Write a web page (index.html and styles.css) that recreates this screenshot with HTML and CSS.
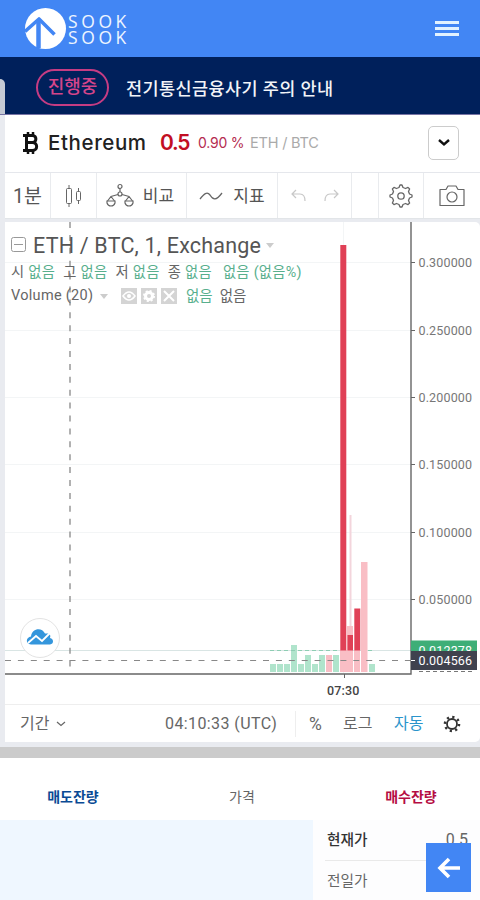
FILE: index.html
```
<!DOCTYPE html>
<html lang="ko">
<head>
    <meta charset="UTF-8" />
    <meta name="viewport" content="width=device-width, initial-scale=1.0"/>
    <title>SOOK SOOK - Ethereum</title>
    <link rel="stylesheet" href="styles.css">
</head>
<body>
<header class="header">
    <a class="logo">
        <svg width="44" height="44" viewBox="0 0 44 44">
            <circle cx="21.5" cy="21.5" r="20.5" fill="#fff"/>
            <path d="M1 24.500L15 12L30.500 27.500" fill="none" stroke="#4286f4" stroke-width="3.600" stroke-linejoin="round"/>
            <path d="M14.500 14V41" stroke="#4286f4" stroke-width="4.500"/>
        </svg>
        <span class="logo-text">SOOK<br>SOOK</span>
    </a>
    <div class="menu"><i></i><i></i><i></i></div>
</header>

<div class="notice">
    <span class="badge">진행중</span>
    <span class="notice-text">전기통신금융사기 주의 안내</span>
    <div class="drawer"></div>
</div>

<main class="market">
    <section class="ticker">
        <svg class="coin" width="18" height="26" viewBox="0 0 18 26" fill="none" stroke="#111" stroke-width="3">
            <path d="M1 5.500H10.500C15 5.500 15 12.500 10.500 12.500H5M10.500 12.500C16 12.500 16 20.500 10.500 20.500H1M4.500 5.500V20.500"/>
            <path d="M6 2V5M11 2V5M6 21V24M11 21V24" stroke-width="2.500"/>
        </svg>
        <span class="name">Ethereum</span>
        <span class="price">0.5</span>
        <span class="change">0.90 %</span>
        <span class="pair">ETH / BTC</span>
        <button class="dropdown">
            <svg width="14" height="9" viewBox="0 0 14 9"><path d="M2 2L7 6.500L12 2" fill="none" stroke="#111" stroke-width="2.400"/></svg>
        </button>
    </section>

    <nav class="toolbar">
        <div class="tool tool-time">1분</div>
        <div class="tool tool-candle">
            <svg width="18" height="24" viewBox="0 0 18 24" fill="none" stroke="#666"><rect x="1.500" y="4.500" width="5" height="15" rx="1"/><rect x="11.500" y="7.500" width="4" height="9" rx="1"/><path d="M4 1V4M4 20V23M13.500 4V7M13.500 17V20"/></svg>
        </div>
        <div class="tool tool-compare">
            <svg width="28" height="25" viewBox="0 0 28 25" fill="none" stroke="#666" stroke-width="1.200"><circle cx="14" cy="3.500" r="2"/><path d="M14 5.500V9M12 11.500L5 13.500L1.500 18M16 11.500L23 13.500L26.500 18M5 13.500L8.500 18M23 13.500L19.500 18"/><circle cx="14" cy="11" r="2"/><path d="M1 18H9V20Q8 23 5 23Q2 23 1 20ZM19 18H27V20Q26 23 23 23Q20 23 19 20Z"/></svg>
            <span>비교</span>
        </div>
        <div class="tool tool-index">
            <svg width="24" height="12" viewBox="0 0 24 12" fill="none" stroke="#666" stroke-width="1.300"><path d="M1 9C5 4 8 1 11 5C14 10 17 11 23 3"/></svg>
            <span>지표</span>
        </div>
        <div class="tool tool-undo">
            <svg width="15" height="14" viewBox="0 0 15 14" fill="none" stroke="#c8c8c8" stroke-width="1.200"><path d="M5 1L1 5L5 9M1 5H9Q14 5 14 12"/></svg>
            <svg width="15" height="14" viewBox="0 0 15 14" fill="none" stroke="#c8c8c8" stroke-width="1.200"><path d="M10 1L14 5L10 9M14 5H6Q1 5 1 12"/></svg>
        </div>
        <div class="tool tool-empty"></div>
        <div class="tool tool-settings">
            <svg width="26" height="26" viewBox="0 0 26 26" fill="none" stroke="#666" stroke-width="1.300"><path stroke-linejoin="round" d="M11 4.500L12 2H14L15 4.500L17.500 5.500L20 4.400L21.600 6L20.500 8.500L21.500 11L24 12V14L21.500 15L20.500 17.500L21.600 20L20 21.600L17.500 20.500L15 21.500L14 24H12L11 21.500L8.500 20.500L6 21.600L4.400 20L5.500 17.500L4.500 15L2 14V12L4.500 11L5.500 8.500L4.400 6L6 4.400L8.500 5.500Z"/><circle cx="13" cy="13" r="3.200"/></svg>
        </div>
        <div class="tool tool-camera">
            <svg width="26" height="22" viewBox="0 0 26 22" fill="none" stroke="#666" stroke-width="1.200"><path d="M1 4.500H7L9 1H17L19 4.500H25V20.500H1Z" stroke-linejoin="round"/><circle cx="13" cy="12" r="5"/></svg>
        </div>
    </nav>

    <section class="chart">
        <svg class="plot" width="474" height="482" viewBox="5 222 474 482">
            <!-- grid -->
            <path d="M5 262.500H411M5 330.500H411M5 397.500H411M5 464.500H411M5 532.500H411M5 599.500H411M343.500 222V673" stroke="#f3f5f6"/>
            <path d="M5 650.500H411" stroke="#d9e5e4"/>

            <!-- volume -->
            <g fill="#b0e4cc">
                <rect x="270" y="664" width="6" height="8"/>
                <rect x="277" y="664" width="6" height="8"/>
                <rect x="284" y="664" width="6" height="8"/>
                <rect x="291" y="645" width="6" height="27"/>
                <rect x="298" y="664" width="6" height="8"/>
                <rect x="305" y="655" width="6" height="17"/>
                <rect x="312" y="664" width="6" height="8"/>
                <rect x="319" y="655" width="6" height="17"/>
                <rect x="333" y="655" width="6" height="17"/>
                <rect x="369" y="664" width="6" height="8"/>
            </g>
            <g fill="#f9bec5">
                <rect x="326" y="655" width="6" height="17"/>
                <rect x="340" y="650" width="7" height="22"/>
                <rect x="347" y="626" width="6" height="46"/>
                <rect x="354" y="650" width="6" height="22"/>
                <rect x="361" y="562" width="6.500" height="110"/>
                <rect x="349.500" y="515" width="2" height="111" fill="#f3d5dc"/>
            </g>

            <!-- candles -->
            <g fill="#e04056">
                <rect x="340.300" y="245" width="6" height="405.500"/>
                <rect x="347.500" y="635" width="5.500" height="15.500"/>
                <rect x="354.300" y="608.500" width="6" height="42"/>
            </g>
            <path d="M270 650.500H340M368 650.500H375" stroke="#8ecdb3" stroke-dasharray="4 3"/>

            <!-- crosshair -->
            <path d="M70 222V667" stroke="#888" stroke-width="1.300" stroke-dasharray="6 6.900"/>
            <path d="M5 660.500H411" stroke="#888" stroke-width="1.200" stroke-dasharray="6 6.900"/>

            <!-- axes -->
            <path d="M411 222V674H5" fill="none" stroke="#666" stroke-width="1.400"/>
            <path d="M411 262.500H415M411 330.500H415M411 397.500H415M411 464.500H415M411 532.500H415M411 599.500H415M344.500 674V678" stroke="#666"/>
            <g class="axis-label">
                <text x="418.500" y="267">0.300000</text>
                <text x="418.500" y="335">0.250000</text>
                <text x="418.500" y="402">0.200000</text>
                <text x="418.500" y="469">0.150000</text>
                <text x="418.500" y="537">0.100000</text>
                <text x="418.500" y="604">0.050000</text>
                <text x="327" y="695" class="time-label">07:30</text>
            </g>
            <rect x="411" y="640.500" width="66" height="14" fill="#3eae77"/>
            <text x="418.500" y="655" class="tag-label">0.012378</text>
            <rect x="411" y="651" width="66" height="19" fill="#3f424e"/>
            <text x="418.500" y="665" class="tag-label">0.004566</text>
            <path d="M411 660.500H415" stroke="#fff"/>
            <path d="M419 671.500H472" stroke="#777" stroke-dasharray="4 3"/>

            <circle cx="40" cy="638" r="19.500" fill="#fff" stroke="#e3e3e3"/>
            <path d="M31 644.500C25 644 26 637 31 636.500C32 628 42 627 45 633.500C50 633 51 635 50 638C54 639 54 644 50 644.500Z" fill="#3496dc"/>
            <path d="M28 643L36 636L42 641L50 633" fill="none" stroke="#fff" stroke-width="1.800"/>
        </svg>

        <div class="legend">
            <div class="legend-title">
                <svg width="16" height="16" viewBox="0 0 16 16" fill="none" stroke="#999"><rect x=".5" y=".5" width="14" height="14" rx="2"/><path d="M3 7.500H12"/></svg>
                <span>ETH / BTC, 1, Exchange</span>
                <i class="caret"></i>
            </div>
            <div class="legend-values">
                <span>시 <b>없음</b></span>
                <span>고 <b>없음</b></span>
                <span>저 <b>없음</b></span>
                <span>종 <b>없음</b></span>
                <span><b>없음 (없음%)</b></span>
            </div>
            <div class="legend-volume">
                <span class="volume-name">Volume (20)</span>
                <i class="caret"></i>
                <div class="study-buttons">
                    <svg width="16" height="16" viewBox="0 0 16 16"><rect width="16" height="16" fill="#d4d4d4"/><path d="M2 8Q8 0 14 8Q8 16 2 8Z" fill="none" stroke="#fff" stroke-width="1.500"/><circle cx="8" cy="8" r="2" fill="#fff"/></svg>
                    <svg width="16" height="16" viewBox="0 0 16 16"><rect width="16" height="16" fill="#d4d4d4"/><circle cx="8" cy="8" r="3.500" fill="none" stroke="#fff" stroke-width="3"/><circle cx="8" cy="8" r="5" fill="none" stroke="#fff" stroke-width="2" stroke-dasharray="2 1.930"/></svg>
                    <svg width="16" height="16" viewBox="0 0 16 16"><rect width="16" height="16" fill="#d4d4d4"/><path d="M3 3L13 13M13 3L3 13" stroke="#fff" stroke-width="2"/></svg>
                </div>
                <b>없음</b>
                <span class="volume-none">없음</span>
            </div>
        </div>
    </section>

    <footer class="chart-footer">
        <span class="range">기간</span>
        <svg class="range-arrow" width="10" height="6" viewBox="0 0 10 6"><path d="M1 1L5 4.500L9 1" fill="none" stroke="#666" stroke-width="1.200"/></svg>
        <span class="clock">04:10:33 (UTC)</span>
        <span class="percent">%</span>
        <span class="log">로그</span>
        <span class="auto">자동</span>
        <svg width="18" height="18" viewBox="0 0 18 18" fill="none" stroke="#333"><circle cx="9" cy="9" r="5" stroke-width="1.800"/><circle cx="9" cy="9" r="7" stroke-width="2.600" stroke-dasharray="2.200 3.300"/></svg>
    </footer>
</main>

<section class="orderbook">
    <div class="order-head">
        <span class="sell">매도잔량</span>
        <span class="cost">가격</span>
        <span class="buy">매수잔량</span>
    </div>
    <div class="order-body">
        <div class="asks"></div>
        <div class="summary">
            <div class="row current"><span>현재가</span><span class="value">0.5</span></div>
            <div class="row"><span>전일가</span></div>
        </div>
    </div>
</section>

<button class="back">
    <svg width="24" height="24" viewBox="0 0 24 24"><path d="M12 3L3 12L12 21M3 12H23" fill="none" stroke="#fff" stroke-width="3.600"/></svg>
</button>
</body>
</html>
```
FILE: styles.css
```
* {
    box-sizing: border-box;
}
body {
    margin: 0;
    width: 480px;
    height: 900px;
    overflow: hidden;
    background: #fff;
    color: #666;
    font-family: Roboto, "Noto Sans CJK KR", sans-serif;
    font-size: 16px;
}
i {
    display: block;
}
svg {
    display: block;
    flex-shrink: 0;
}
span, b {
    white-space: nowrap;
}
button {
    display: flex;
    align-items: center;
    justify-content: center;
    padding: 0;
}
.header {
    height: 57px;
    padding: 0 21px 0 24px;
    display: flex;
    align-items: center;
    justify-content: space-between;
    background: #4286f4;
}
.logo {
    display: flex;
    align-items: center;
}
.logo-text {
    color: #eef5ff;
    font-family: "Open Sans", sans-serif;
    font-size: 17.5px;
    line-height: 16px;
    letter-spacing: 3.6px;
}
.menu {
    width: 24px;
    display: grid;
    gap: 3px;
}
.menu i {
    height: 3px;
    background: #e2f2ff;
}
.notice {
    position: relative;
    height: 58px;
    padding: 4px 0 0 36px;
    display: flex;
    align-items: center;
    background: #00205b;
    border-bottom: 1px solid #7774a5;
}
.badge {
    width: 73px;
    height: 37px;
    margin-right: 17px;
    border: 2px solid #c53c83;
    border-radius: 19px;
    color: #d4458a;
    font-size: 18px;
    font-weight: 500;
    line-height: 32px;
    text-align: center;
}
.notice-text {
    color: #f2f4f8;
    font-size: 17.5px;
    font-weight: 500;
    letter-spacing: 0.4px;
}
.drawer {
    position: absolute;
    left: 0;
    bottom: 0;
    width: 5px;
    height: 35px;
    background: #c5cad4;
    border-radius: 0 5px 0 0;
}
.market {
    height: 643px;
    padding-left: 5px;
    background: #e9ebf0;
    border-bottom: 11px solid #cbcbcb;
}
.ticker {
    height: 58px;
    padding: 0 21px 2px 17px;
    display: flex;
    align-items: center;
    background: #fff;
    border-bottom: 1px solid #e5e7ec;
}
.coin {
    margin-right: 8px;
}
.name {
    width: 112px;
    color: #222;
    font-family: Inter, sans-serif;
    font-size: 20.5px;
    font-weight: 500;
    letter-spacing: 0.6px;
}
.price {
    width: 38px;
    color: #c20e23;
    font-family: Inter, sans-serif;
    font-size: 21px;
    font-weight: 600;
    letter-spacing: -1.2px;
}
.change {
    width: 52px;
    color: #b52c50;
    font-family: Inter, sans-serif;
    font-size: 14px;
    letter-spacing: -0.2px;
}
.pair {
    color: #aaa;
    font-family: Inter, sans-serif;
    font-size: 14.5px;
    letter-spacing: -0.2px;
}
.dropdown {
    width: 31px;
    height: 34px;
    margin-left: auto;
    background: #fff;
    border: 1px solid #ccc;
    border-radius: 5px;
}
.toolbar {
    height: 46px;
    display: flex;
    background: #fff;
    border-bottom: 1px solid #e2e5e8;
}
.tool {
    display: flex;
    align-items: center;
    justify-content: center;
    border-right: 1px solid #e9ebee;
    color: #555;
    font-size: 17px;
}
.tool span {
    padding-bottom: 2px;
}
.tool-time {
    width: 46px;
    padding-bottom: 2px;
    font-size: 19.5px;
}
.tool-candle {
    width: 46px;
}
.tool-compare {
    width: 90px;
    padding-right: 3px;
    gap: 9px;
}
.tool-index {
    width: 91px;
    gap: 10px;
}
.tool-undo {
    width: 74px;
    gap: 18px;
}
.tool-empty {
    width: 27px;
}
.tool-settings {
    width: 45px;
}
.tool-camera {
    flex: 1;
    border: 0;
}
.chart {
    position: relative;
    height: 483px;
    margin-top: 3px;
    background: #fff;
    border-radius: 0 5px 0 0;
    border-bottom: 1px solid #eee;
}
.axis-label {
    fill: #777;
    font-size: 12.5px;
    letter-spacing: 0.15px;
}
.time-label {
    fill: #444;
    font-weight: 500;
}
.tag-label {
    fill: #fff;
    font-size: 12.5px;
    letter-spacing: 0.15px;
}
.legend {
    position: absolute;
    top: 9px;
    left: 6px;
    font-size: 14px;
}
.legend b {
    color: #58af8d;
    font-weight: 400;
}
.legend-title {
    height: 28px;
    display: flex;
    align-items: center;
    color: #555;
    font-size: 21.5px;
    letter-spacing: 0.2px;
}
.legend-title span {
    margin: 0 5px 0 6px;
}
.caret {
    border: 4px solid transparent;
    border-top: 5px solid #ccc;
    border-bottom: 0;
}
.legend-values {
    height: 22px;
    display: flex;
    align-items: center;
    gap: 8px;
    font-size: 14.3px;
    letter-spacing: 0.3px;
}
.legend-values span:last-child {
    margin-left: 3px;
}
.legend-volume {
    height: 30px;
    display: flex;
    align-items: center;
}
.volume-name {
    width: 89px;
    padding-bottom: 1px;
    font-size: 14.5px;
    letter-spacing: 0.3px;
}
.study-buttons {
    width: 65px;
    margin-left: 13px;
    display: flex;
    gap: 4px;
}
.legend-volume b {
    margin-right: 7px;
    padding-bottom: 3px;
    font-size: 14.5px;
}
.volume-none {
    padding-bottom: 3px;
    font-size: 14.5px;
}
.chart-footer {
    height: 37px;
    padding: 0 18px 0 15px;
    display: flex;
    align-items: center;
    background: #fff;
    border-radius: 0 0 5px 0;
}
.range {
    width: 36px;
    padding-bottom: 3px;
    font-size: 16px;
}
.clock {
    width: 131px;
    height: 26px;
    margin-left: 99px;
    border-right: 1px solid #eee;
    font-size: 16px;
    line-height: 26px;
    letter-spacing: 0.4px;
}
.percent {
    width: 34px;
    margin-left: 13px;
    font-size: 17.5px;
}
.log {
    width: 51px;
    padding-bottom: 3px;
}
.auto {
    width: 49px;
    padding-bottom: 3px;
    color: #2a94cb;
}
.order-head {
    height: 62px;
    padding-top: 15px;
    display: grid;
    grid-template-columns: 146px 192px 1fr;
    text-align: center;
    font-size: 14px;
}
.sell {
    color: #0a4a94;
    font-weight: 700;
}
.buy {
    padding-left: 4px;
    color: #b50d43;
    font-weight: 700;
}
.cost {
    font-size: 14px;
    color: #666;
}
.sell, .buy, .cost {
    line-height: 48px;
}
.order-body {
    height: 80px;
    display: flex;
}
.asks {
    width: 313px;
    background: #eff7ff;
}
.summary {
    flex: 1;
    padding: 0 12px;
    background: #fdfdfe;
}
.row {
    height: 40px;
    padding: 0 0 3px 2px;
    display: flex;
    align-items: center;
    justify-content: space-between;
    border-bottom: 1px solid #e9e9e9;
    font-size: 14.7px;
}
.current {
    height: 41px;
    color: #333;
    font-weight: 500;
}
.value {
    padding-top: 1px;
    color: #666;
    font-size: 16px;
    font-weight: 400;
}
.back {
    position: absolute;
    left: 426px;
    top: 843px;
    width: 45px;
    height: 49px;
    background: #4286f4;
    border: 0;
}
```
